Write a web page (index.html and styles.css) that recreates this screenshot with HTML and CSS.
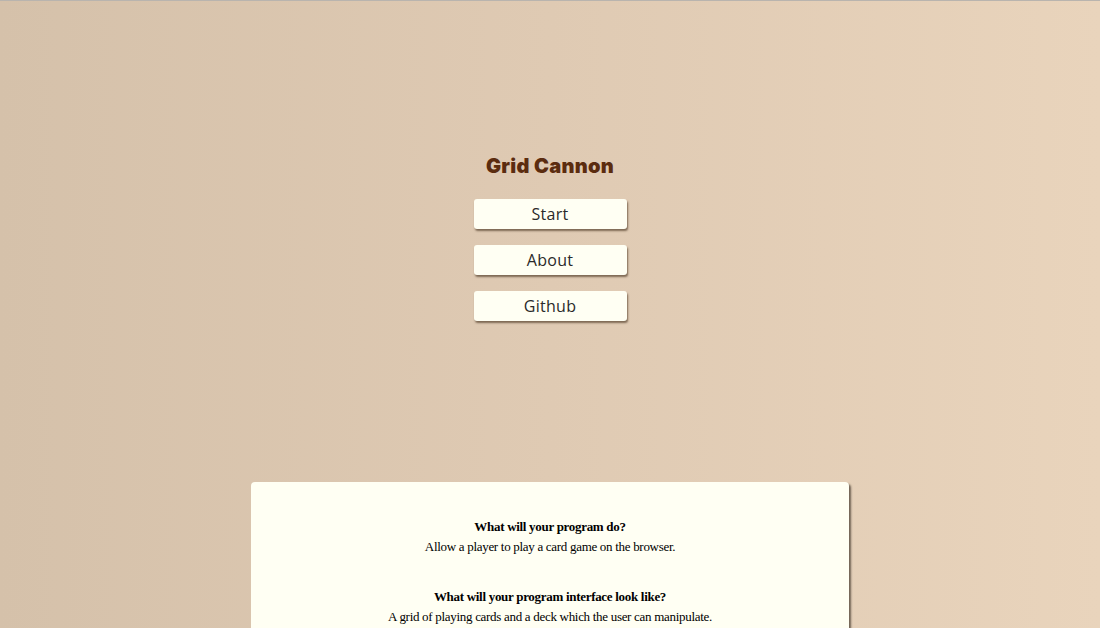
FILE: index.html
```html
<!DOCTYPE html>
<html lang="en">
<head>
<meta charset="utf-8">
<title>Grid Cannon</title>
<link rel="stylesheet" href="styles.css">
</head>
<body>
<main class="page">
  <section class="menu">
    <h1 class="title">Grid Cannon</h1>
    <nav class="buttons">
      <button class="btn">Start</button>
      <button class="btn">About</button>
      <button class="btn">Github</button>
    </nav>
  </section>
  <section class="card">
    <div class="qa">
      <p class="q">What will your program do?</p>
      <p class="a">Allow a player to play a card game on the browser.</p>
    </div>
    <div class="qa">
      <p class="q">What will your program interface look like?</p>
      <p class="a">A grid of playing cards and a deck which the user can manipulate.</p>
    </div>
  </section>
</main>
</body>
</html>
```

FILE: styles.css
```css
html, body {
  margin: 0;
  padding: 0;
  height: 100%;
}
body {
  background: linear-gradient(90deg, #d5c1aa 0%, #dfcab3 50%, #e9d4bc 100%);
  border-top: 1px solid #b9b4ae;
  overflow: hidden;
  font-family: "Liberation Serif", serif;
}
.page {
  display: flex;
  flex-direction: column;
  align-items: center;
}
.menu {
  display: flex;
  flex-direction: column;
  align-items: center;
  padding-top: 152px;
}
.title {
  margin: 0;
  font-family: Inter, "DejaVu Sans", sans-serif;
  font-weight: 900;
  font-size: 20px;
  line-height: 26px;
  color: #5b2c0f;
  letter-spacing: 0.3px;
}
.buttons {
  display: flex;
  flex-direction: column;
  gap: 16px;
  margin-top: 20px;
}
.btn {
  width: 153px;
  height: 30px;
  border: none;
  border-radius: 3px;
  background: #fffff3;
  box-shadow: 1px 2px 2px rgba(60, 40, 20, 0.6);
  font-family: "Open Sans", "DejaVu Sans", sans-serif;
  font-size: 16px;
  color: #2a2a2a;
  letter-spacing: 0.3px;
  padding: 0;
  cursor: pointer;
}
.card {
  margin-top: 161px;
  width: 598px;
  background: #fffff3;
  border-radius: 4px;
  box-shadow: 2px 2px 2px rgba(50, 40, 30, 0.65);
  padding: 35px 0 40px;
  display: flex;
  flex-direction: column;
  gap: 30px;
  text-align: center;
  color: #000;
}
.qa p {
  margin: 0;
  font-size: 13px;
  line-height: 20px;
  letter-spacing: -0.3px;
}
.q {
  font-weight: bold;
}
```
